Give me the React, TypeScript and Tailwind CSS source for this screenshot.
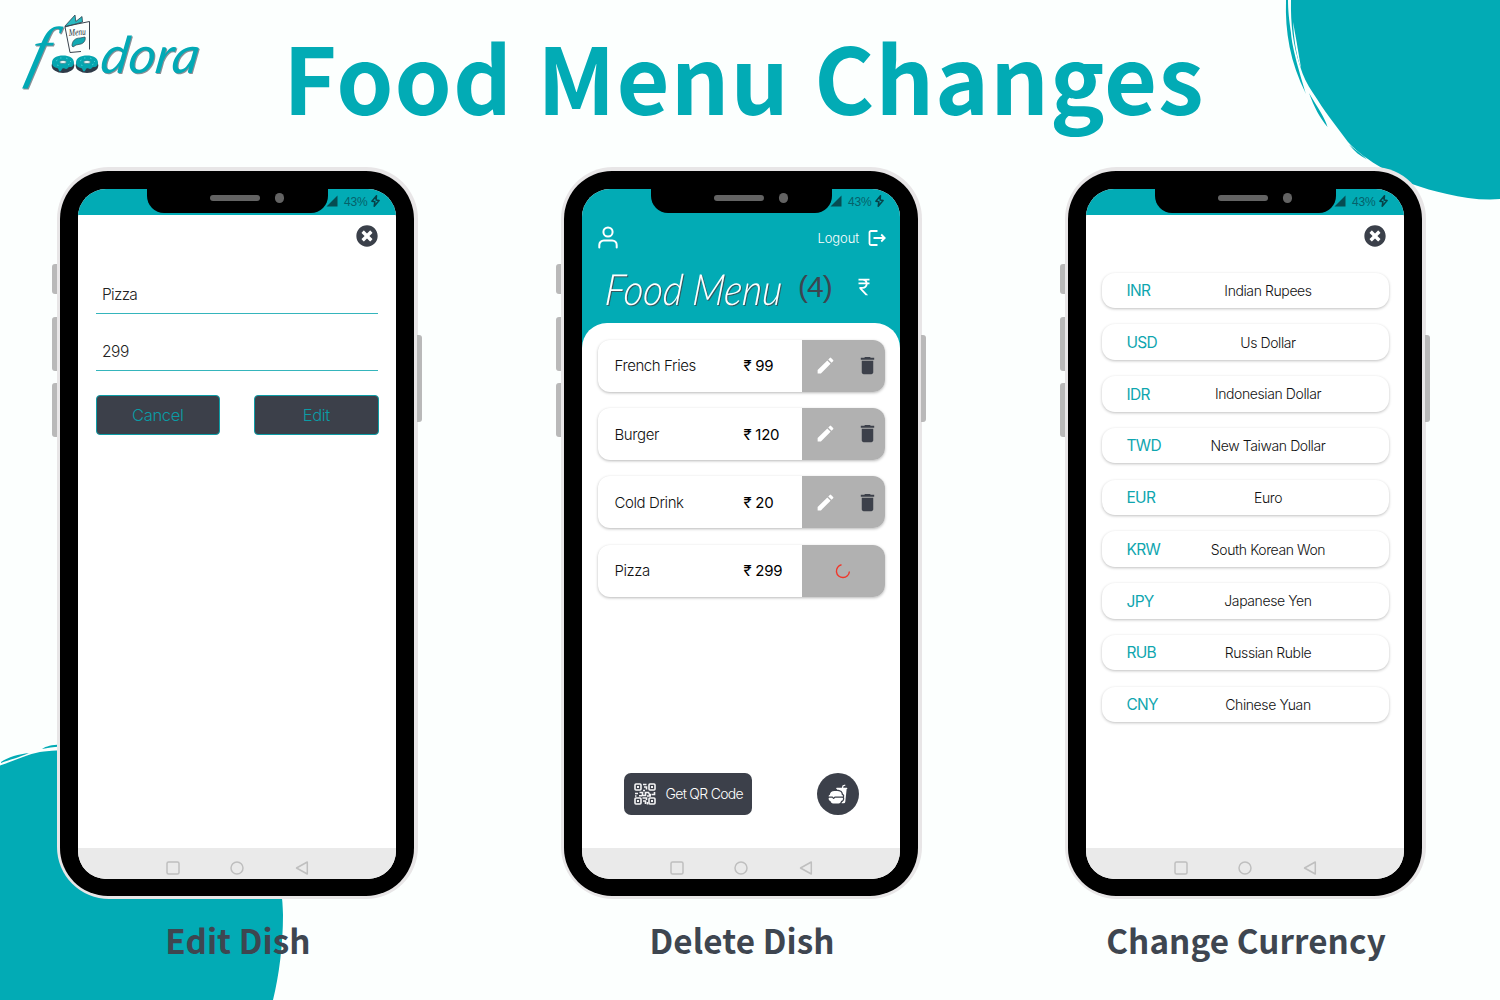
import type { ReactNode } from "react";
import { FaTimesCircle } from "react-icons/fa";
import { MdCurrencyRupee, MdDelete, MdEdit } from "react-icons/md";
import { IoFastFood } from "react-icons/io5";

const dishes = [
  { name: "French Fries", price: "99" },
  { name: "Burger", price: "120" },
  { name: "Cold Drink", price: "20" },
  { name: "Pizza", price: "299", deleting: true },
];

const currencies = [
  ["INR", "Indian Rupees"],
  ["USD", "Us Dollar"],
  ["IDR", "Indonesian Dollar"],
  ["TWD", "New Taiwan Dollar"],
  ["EUR", "Euro"],
  ["KRW", "South Korean Won"],
  ["JPY", "Japanese Yen"],
  ["RUB", "Russian Ruble"],
  ["CNY", "Chinese Yuan"],
];

function Backdrop() {
  return (
    <svg className="absolute inset-0" width="1500" height="1000" viewBox="0 0 1500 1000" fill="#02abb5">
      <path d="M1291 0C1290.500 24 1293 45 1300 66C1303 76 1307 84 1313 93C1319 102 1324 110 1330 118L1348 142C1357 152 1370 161 1382 168C1392 174 1402 180 1412 184C1423 188 1434 191 1447 194C1461 197.500 1475 199.500 1490 199.500L1500 199V0Z" />
      <path d="M1286 0C1285 32 1290 62 1306 94C1300 74 1292 48 1291 33C1289 20 1288 10 1288 0Z" />
      <path d="M1309 93C1314 107 1320 118 1327.500 127C1325 118 1318 108 1309 93Z" />
      <path d="M1349 144.500C1354 151 1360 156 1367 159.500C1361 154 1356 150 1349 144.500Z" />
      <path d="M1293 22C1294 42 1297 58 1301 68C1298 50 1296 38 1293 22Z" fill="#fcfffe" />
      <path d="M0 765.500C22 758 32 752.500 44 751.500C54 750 66 750 78 750C200 752 283 820 283 915C283 945 279 976 273 1000H0Z" />
      <path d="M1 762C8 757 19 754 29 753C20 757 9 760 1 763Z" />
      <path d="M42 749C46 746 52 745 60 744.500V746.500C53 747 48 748 42 749Z" />
    </svg>
  );
}

function Donut({ x }: { x: number }) {
  return (
    <g transform={`translate(${x} 55)`}>
      <ellipse cx="11" cy="10.500" rx="11.300" ry="7.500" fill="#2f3b48" />
      <path d="M0 7.500C0 3 5 .5 11 .5s11 2.500 11 7c0 3-2 5-4 4.500-2-.4-2 2-4 2-1.500 0-2-1-3.500-.500-1 .5-1 3-2.500 3s-1-3-3-3.500C2.500 12.500 0 11 0 7.500Z" fill="#06a5af" />
      <ellipse cx="11" cy="7" rx="3.300" ry="1.500" fill="#eefafa" stroke="#276a75" strokeWidth=".6" />
      <path d="M4 6l1.500-1M8 3h1.500M14 3l1.500.7M18 6l1 1M5 10l1.500.5M16 10l1.500-1" stroke="#5ce0e5" strokeWidth=".7" />
    </g>
  );
}

function Logo() {
  return (
    <svg className="absolute left-0 top-0" width="220" height="110" viewBox="0 0 220 110" aria-label="foodora">
      <g className="[filter:drop-shadow(1.5px_1.5px_0.5px_#8a8f96)]" fill="#02a9b5">
        <text transform="translate(25 74) skewX(-14)" x="0" y="0" fontFamily="Liberation Serif, serif" fontStyle="italic" fontSize="68" textLength="19" lengthAdjust="spacingAndGlyphs">f</text>
        <text transform="translate(99 72.500) skewX(-9)" x="0" y="0" fontFamily="Lato, sans-serif" fontStyle="italic" fontSize="51" textLength="98" lengthAdjust="spacingAndGlyphs">dora</text>
      </g>
      <Donut x={52} />
      <Donut x={76} />
      <path d="M65 26L75 15l1 6 7-5-1 6 7-1 .5 29L70 52.500Z" fill="#fcfffe" />
      <path d="M65 26L75 15l.8 6.500L82 16.500l.5 5.500L65 27Z" fill="#28b9c1" stroke="#31434f" strokeWidth=".8" />
      <path d="M65 26.500L89.500 21.500V49.500M65 27l5 25.500 11-1" fill="none" stroke="#39434d" strokeWidth="1" />
      <path d="M72 46c0-5 3-8 8-8l5-1c1 3-1 6-4 7l-5 1-3 2Z" fill="#13a9b2" stroke="#31434f" strokeWidth=".7" />
      <text x="69" y="36" fontFamily="Liberation Serif, serif" fontStyle="italic" fontSize="10" fill="#27323c" textLength="17" lengthAdjust="spacingAndGlyphs" transform="rotate(-4 69 36)">Menu</text>
    </svg>
  );
}

function SideKeys() {
  return (
    <>
      <span className="absolute -left-[4.500px] top-[97px] h-[30px] w-[5px] rounded-l-[3px] bg-[#b9b9b9]" />
      <span className="absolute -left-[4.500px] top-[149.500px] h-[54px] w-[5px] rounded-l-[3px] bg-[#b9b9b9]" />
      <span className="absolute -left-[4.500px] top-[216px] h-[54px] w-[5px] rounded-l-[3px] bg-[#b9b9b9]" />
      <span className="absolute -right-[4.500px] top-[167.500px] h-[87px] w-[5px] rounded-r-[3px] bg-[#b9b9b9]" />
    </>
  );
}

function StatusBar() {
  return (
    <div className="relative flex h-[26px] shrink-0 items-start justify-end bg-[#02abb5] pr-[16.500px]">
      <div className="absolute left-[69px] top-[-1px] h-[25.300px] w-[181px] rounded-b-[17px] bg-black">
        <span className="absolute left-[62.500px] top-[7px] h-[6px] w-[50px] rounded-full bg-[#636363]" />
        <span className="absolute left-[127.500px] top-[5px] h-[10px] w-[9.500px] rounded-full bg-[#636363]" />
      </div>
      <div className="relative flex h-[25px] items-center">
        <svg width="12" height="12" viewBox="0 0 12 12" className="mr-[6px]">
          <path d="M.5 11.500L11.500.5v11Z" fill="#064c52" />
        </svg>
        <span className="mt-[1px] font-['Liberation_Sans',sans-serif] text-[12px] tracking-[-0.2px] text-[#06616a]">43%</span>
        <svg width="9" height="12" viewBox="0 0 9 12" className="ml-[3px]">
          <path d="M5.500.8L.9 6.200l3 .6L3.200 11.200 8.100 5.600l-3-.6Z" fill="none" stroke="#064248" strokeWidth="1.500" strokeLinejoin="round" />
        </svg>
      </div>
    </div>
  );
}

function NavBar() {
  return (
    <div className="flex h-[31px] shrink-0 items-center justify-center gap-[50.500px] bg-[#eaeaea] pt-[9px]">
      <svg width="14" height="14" fill="none" stroke="#bfbfbf" strokeWidth="1.500">
        <rect x="1" y="1" width="12" height="12" rx="1.500" />
      </svg>
      <svg width="14" height="14" fill="none" stroke="#bfbfbf" strokeWidth="1.500">
        <circle cx="7" cy="7" r="6" />
      </svg>
      <svg width="14" height="14" fill="none" stroke="#bfbfbf" strokeWidth="1.500" strokeLinejoin="round">
        <path d="M12.300 1v12L1.500 7Z" />
      </svg>
    </div>
  );
}

function Phone({ caption, children }: { caption: string; children: ReactNode }) {
  return (
    <section className="flex w-[361px] flex-col items-center">
      <div className="relative h-[732px] w-[361px] rounded-[52px] bg-[#e8e6e7] p-[3.500px]">
        <SideKeys />
        <div className="h-full rounded-[48px] bg-black px-[18px] pb-[16.500px] pt-[18px]">
          <div className="flex h-full flex-col overflow-hidden rounded-[28px] bg-white font-[Inter,'Liberation_Sans',sans-serif]">
            <StatusBar />
            <div className="flex min-h-0 flex-1 flex-col">{children}</div>
            <NavBar />
          </div>
        </div>
      </div>
      <h2 className="mt-[17.500px] whitespace-nowrap pl-[2px] text-[33.200px] font-bold leading-[46px] tracking-[0.1px] text-[#3e4650]">{caption}</h2>
    </section>
  );
}

function CloseButton() {
  return (
    <div className="flex justify-end pr-[18px] pt-[10px]">
      <FaTimesCircle size={22} color="#3b404a" />
    </div>
  );
}

function EditDish() {
  return (
    <>
      <CloseButton />
      <div className="mx-[18px] mt-[27px] flex flex-col text-[15.500px] font-light tracking-[-0.700px] text-[#222]">
        <div className="flex h-[40px] items-center border-b border-[#35b5bc] pl-[6px] pt-[3px]">Pizza</div>
        <div className="mt-[17px] flex h-[40px] items-center border-b border-[#35b5bc] pl-[6px] pt-[3px] tracking-[-0.400px]">299</div>
      </div>
      <div className="mx-[17.500px] mt-[24.500px] flex justify-between text-[16.500px] font-light tracking-[-0.350px] text-[#0a9ca6]">
        <div className="flex h-[39.500px] w-[124.500px] items-center justify-center rounded-[4px] border border-[#0d9da6] bg-[#3c404a] pt-[2px]">Cancel</div>
        <div className="flex h-[39.500px] w-[124.500px] items-center justify-center rounded-[4px] border border-[#0d9da6] bg-[#3c404a] pt-[2px]">Edit</div>
      </div>
    </>
  );
}

function QrIcon() {
  return (
    <svg width="22" height="22" viewBox="0 0 22 22" fill="none" stroke="#f4f4f5" strokeWidth="1.600">
      <rect x="1" y="1" width="6" height="6" rx="1" />
      <rect x="15" y="1" width="6" height="6" rx="1" />
      <rect x="1" y="15" width="6" height="6" rx="1" />
      <rect x="15" y="15" width="6" height="6" rx="1" />
      <path d="M3 4h2M17 4h2M3 18h2M17 18h2" strokeWidth="2" />
      <path d="M9 1.500h3.500M10 4h2.500v2.500M9 7.500h2M1 10.500h3M5.500 9.500h3v3h3v-3h3l1 2h2M20.500 9v2.500H18M1 13h1.500M5 12.700h3M8.500 15h4v2M13 13h4M9 18h2.500v3M13.500 19v2.500" />
    </svg>
  );
}

function DishRow({ name, price, deleting }: { name: string; price: string; deleting?: boolean }) {
  return (
    <div className="flex h-[52px] items-center overflow-hidden rounded-[12px] bg-white text-[15px] shadow-[0_1px_3px_rgba(0,0,0,0.28)]">
      <span className="w-[146px] pl-[17px] pt-[2px] font-light tracking-[-0.400px] text-[#111]">{name}</span>
      <span className="flex-1 pt-[2px] tracking-[-0.300px] text-black">
        ₹<span className="ml-[4px]">{price}</span>
      </span>
      <div className="flex h-full w-[83px] items-center justify-center bg-[#b1b1b1]">
        {deleting ? (
          <svg width="16" height="16" viewBox="0 0 16 16" fill="none" stroke="#f0372b" strokeWidth="1.400">
            <path d="M6.500 1.700A6.500 6.500 0 1 0 14.400 8.500" />
          </svg>
        ) : (
          <div className="flex items-center gap-[20px] pl-[8px]">
            <MdEdit size={21} color="#fff" />
            <MdDelete size={23} color="#3c404a" />
          </div>
        )}
      </div>
    </div>
  );
}

function DeleteDish() {
  return (
    <div className="flex flex-1 flex-col bg-[#02abb5]">
      <div className="flex h-[46px] items-center justify-between pl-[15px] pr-[14px]">
        <svg width="22" height="24" viewBox="0 0 22 24" fill="none" stroke="#fff" strokeWidth="2" strokeLinecap="round">
          <circle cx="11" cy="6" r="4.600" />
          <path d="M2.300 21.500v-2.500a4.500 4.500 0 0 1 4.500-4.500h8.400a4.500 4.500 0 0 1 4.500 4.500v2.500" />
        </svg>
        <div className="flex items-center gap-[9px] text-[13px] font-light tracking-[-0.100px] text-white">
          <span className="pt-[2px]">Logout</span>
          <svg width="18" height="16" viewBox="0 0 18 16" fill="none" stroke="#fff" strokeWidth="1.800">
            <path d="M9.500 1H3a1.500 1.500 0 0 0-1.500 1.500v11A1.500 1.500 0 0 0 3 15h6.500M5.500 8h11M13.200 4.500 16.700 8l-3.500 3.500" />
          </svg>
        </div>
      </div>
      <div className="flex h-[62px] items-center pl-[19px]">
        <svg width="190" height="56" viewBox="0 0 190 56" className="overflow-visible [filter:drop-shadow(1px_1.500px_0.500px_#34585e)]">
          <text transform="translate(3 41) skewX(-5)" x="0" y="0" fontFamily="Lato, sans-serif" fontStyle="italic" fontWeight="300" fontSize="43" fill="#fff" textLength="177" lengthAdjust="spacingAndGlyphs">Food Menu</text>
        </svg>
        <span className="ml-[7px] mt-[-11px] w-[58px] font-['Liberation_Sans',sans-serif] text-[30px] tracking-[-1px] text-[#3c4650]">(4)</span>
        <MdCurrencyRupee size={22} color="#fff" className="-ml-[3px] mt-[-10px]" />
      </div>
      <div className="flex flex-1 flex-col rounded-t-[25px] bg-white px-[15.500px] pt-[17px]">
        <div className="flex flex-col gap-[16.400px]">
          {dishes.map((d) => (
            <DishRow key={d.name} {...d} />
          ))}
        </div>
        <div className="mt-auto mb-[33.500px] flex items-center justify-between pl-[26px] pr-[26px]">
          <div className="flex h-[42px] w-[128px] items-center gap-[10px] rounded-[7px] bg-[#3c404a] pl-[10px] text-[14px] font-light tracking-[-0.700px] text-white">
            <QrIcon />
            <span className="whitespace-nowrap">Get QR Code</span>
          </div>
          <div className="flex size-[42px] items-center justify-center rounded-full bg-[#3c404a]">
            <IoFastFood size={20} color="#fff" />
          </div>
        </div>
      </div>
    </div>
  );
}

function ChangeCurrency() {
  return (
    <>
      <CloseButton />
      <div className="mx-[15.500px] mt-[26px] flex flex-col gap-[16.250px]">
        {currencies.map(([code, name]) => (
          <div key={code} className="flex h-[35.500px] items-center rounded-[13px] bg-white pl-[25px] shadow-[0_1px_3px_rgba(0,0,0,0.25)]">
            <span className="w-[51px] pt-px text-[15.500px] tracking-[-0.700px] text-[#0fa6af]">{code}</span>
            <span className="w-[181px] text-center text-[14px] font-light tracking-[-0.400px] text-[#111]">{name}</span>
          </div>
        ))}
      </div>
    </>
  );
}

export default function App() {
  return (
    <div className="relative h-[1000px] w-[1500px] overflow-hidden bg-[#fcfffe] font-['Noto_Sans_CJK_JP','Open_Sans',sans-serif]">
      <Backdrop />
      <Logo />
      <header className="relative flex h-[167px] justify-center pr-[12px]">
        <h1 className="mt-[9px] whitespace-nowrap text-[91.500px] font-bold leading-[132px] tracking-[1.100px] text-[#02abb5] [word-spacing:2.500px]">Food Menu Changes</h1>
      </header>
      <main className="relative flex gap-[143px] pl-[56.500px]">
        <Phone caption="Edit Dish"><EditDish /></Phone>
        <Phone caption="Delete Dish"><DeleteDish /></Phone>
        <Phone caption="Change Currency"><ChangeCurrency /></Phone>
      </main>
    </div>
  );
}
